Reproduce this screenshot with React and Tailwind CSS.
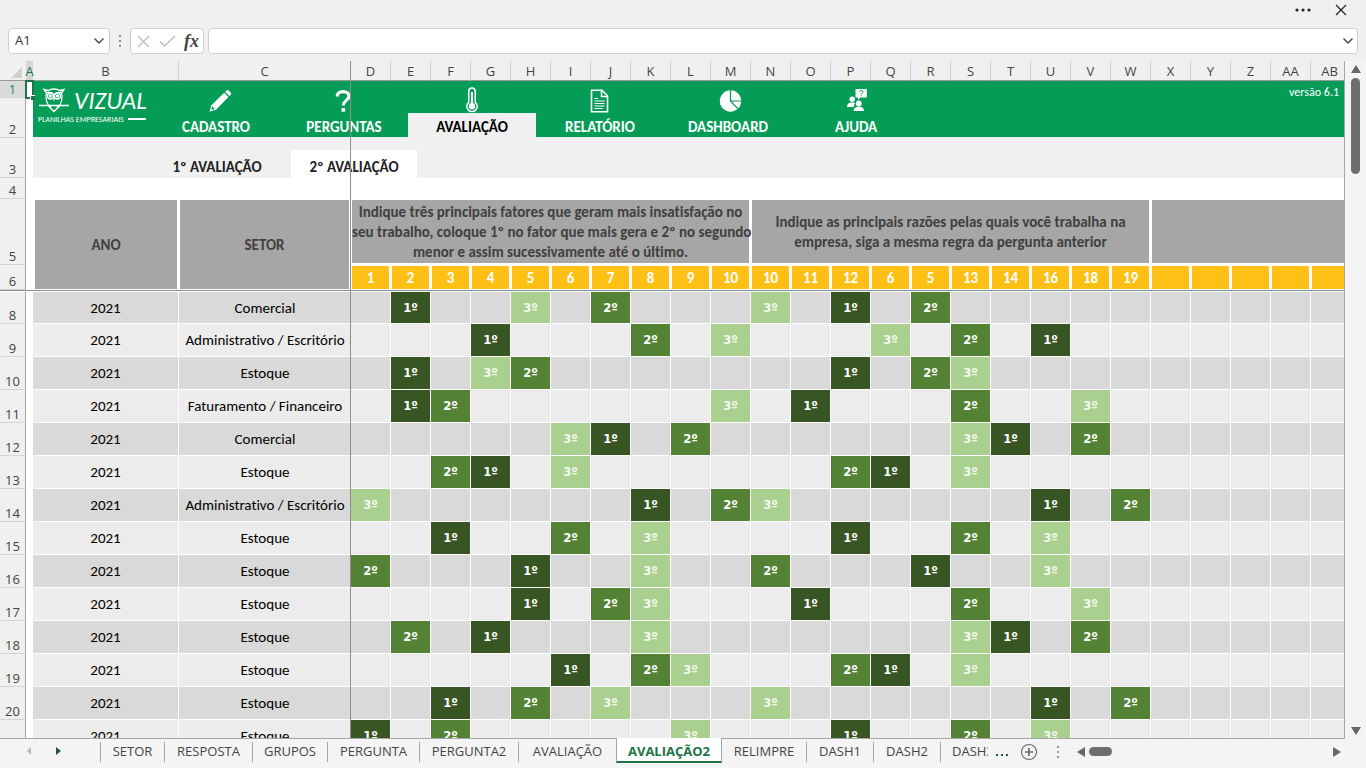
import React from "react";

const COLUMNS = ["D","E","F","G","H","I","J","K","L","M","N","O","P","Q","R","S","T","U","V","W","X","Y","Z","AA","AB"];

const FACTORS = ["1","2","3","4","5","6","7","8","9","10","10","11","12","6","5","13","14","16","18","19","","","","",""];

const ROWS = [
  { n: 8, sector: "Comercial", ranks: { E: 1, H: 3, J: 2, N: 3, P: 1, R: 2 } },
  { n: 9, sector: "Administrativo / Escritório", ranks: { G: 1, K: 2, M: 3, Q: 3, S: 2, U: 1 } },
  { n: 10, sector: "Estoque", ranks: { E: 1, G: 3, H: 2, P: 1, R: 2, S: 3 } },
  { n: 11, sector: "Faturamento / Financeiro", ranks: { E: 1, F: 2, M: 3, O: 1, S: 2, V: 3 } },
  { n: 12, sector: "Comercial", ranks: { I: 3, J: 1, L: 2, S: 3, T: 1, V: 2 } },
  { n: 13, sector: "Estoque", ranks: { F: 2, G: 1, I: 3, P: 2, Q: 1, S: 3 } },
  { n: 14, sector: "Administrativo / Escritório", ranks: { D: 3, K: 1, M: 2, N: 3, U: 1, W: 2 } },
  { n: 15, sector: "Estoque", ranks: { F: 1, I: 2, K: 3, P: 1, S: 2, U: 3 } },
  { n: 16, sector: "Estoque", ranks: { D: 2, H: 1, K: 3, N: 2, R: 1, U: 3 } },
  { n: 17, sector: "Estoque", ranks: { H: 1, J: 2, K: 3, O: 1, S: 2, V: 3 } },
  { n: 18, sector: "Estoque", ranks: { E: 2, G: 1, K: 3, S: 3, T: 1, V: 2 } },
  { n: 19, sector: "Estoque", ranks: { I: 1, K: 2, L: 3, P: 2, Q: 1, S: 3 } },
  { n: 20, sector: "Estoque", ranks: { F: 1, H: 2, J: 3, N: 3, U: 1, W: 2 } },
  { n: 21, sector: "Estoque", ranks: { D: 1, F: 2, L: 3, P: 1, S: 2, U: 3 } },
];

const RANK_STYLE = {
  1: "bg-[#375623] text-white",
  2: "bg-[#548235] text-white",
  3: "bg-[#a9d08e] text-[#f4faef]",
};

const SHEETS = [
  { name: "SETOR", width: "w-16" },
  { name: "RESPOSTA", width: "w-[88px]" },
  { name: "GRUPOS", width: "w-[75px]" },
  { name: "PERGUNTA", width: "w-[92px]" },
  { name: "PERGUNTA2", width: "w-[99px]" },
  { name: "AVALIAÇÃO", width: "w-[98px]" },
  { name: "AVALIAÇÃO2", width: "w-[106px]", active: true },
  { name: "RELIMPRE", width: "w-[84px]" },
  { name: "DASH1", width: "w-[67px]" },
  { name: "DASH2", width: "w-[67px]" },
];

function PencilIcon() {
  return (
    <svg width="32" height="24" viewBox="0 0 32 24" fill="white" aria-hidden="true">
      <path d="M9.500 22.800l1.900-6.600L24.200 3.800l4.300 4.300L16 20.700z" />
      <path d="M25.200 2.900l1.300-1.300a1.500 1.500 0 0 1 2.200 0l2 2a1.500 1.500 0 0 1 0 2.200l-1.300 1.300z" />
      <path d="M12.200 17.200l2.700 2.700-2.800.8-.7-.7z" fill="#059c57" />
    </svg>
  );
}

function QuestionIcon() {
  return (
    <svg width="24" height="24" viewBox="0 0 24 24" fill="none" stroke="white" strokeWidth="3.200" aria-hidden="true">
      <path d="M5.300 7.500C5.300 4.200 7.800 2.600 11.100 2.600c3.400 0 5.800 1.700 5.800 4.600 0 4.100-5.600 4.400-5.600 9.300" />
      <path d="M9.500 19h3.700v3.700H9.500z" fill="white" stroke="none" />
    </svg>
  );
}

function ThermometerIcon() {
  return (
    <svg width="24" height="26" viewBox="0 0 24 26" fill="none" stroke="white" aria-hidden="true">
      <path d="M8.800 15.300V4.200a3.200 3.200 0 0 1 6.400 0v11.100a5.200 5.200 0 1 1-6.400 0z" strokeWidth="1.500" />
      <path d="M12 5v12" strokeWidth="2" />
      <circle cx="12" cy="19.300" r="3.200" fill="white" stroke="none" />
    </svg>
  );
}

function ReportIcon() {
  return (
    <svg width="24" height="24" viewBox="0 0 24 24" fill="none" stroke="white" aria-hidden="true">
      <path d="M3.500 1.200H14L19.500 6.800v15.900h-16z" strokeWidth="1.600" />
      <path d="M13.500 1.500v6h5.800" strokeWidth="1.500" />
      <path d="M6.500 9.500H10M6.500 12h10M6.500 14.500h10M6.500 17h10M6.500 19.500h8" strokeWidth="1.200" />
    </svg>
  );
}

function PieIcon() {
  return (
    <svg width="28" height="24" viewBox="0 0 28 24" aria-hidden="true">
      <circle cx="16.500" cy="12" r="10.700" fill="white" />
      <path d="M16.500 1v11h11M16.500 12l7.500 7.800" fill="none" stroke="#059c57" strokeWidth="1.200" />
    </svg>
  );
}

function HelpIcon() {
  return (
    <svg width="24" height="26" viewBox="0 0 24 26" fill="white" aria-hidden="true">
      <path d="M11.500 2h11.300v8.500h-6.500L14 13v-2.500h-2.500z" />
      <path d="M15.600 5c0-2.100 3.300-2 3.300 0 0 1.200-1.600 1.200-1.600 2.300M17.200 8.200v1" fill="none" stroke="#059c57" strokeWidth="1" />
      <circle cx="8.200" cy="12.200" r="2.700" />
      <path d="M3 20c0-3.300 2-4.600 5.200-4.600 1.300 0 2.400.2 3.200.8-1.200 1-1.600 2.200-1.800 3.800z" />
      <circle cx="14.800" cy="16.500" r="2.900" />
      <path d="M9.600 24c0-3 1.800-4.200 5.200-4.200s5.200 1.200 5.200 4.200z" />
    </svg>
  );
}

function Logo() {
  return (
    <div className="flex w-[119px] flex-col pt-1 pl-[5px] text-white">
      <div className="flex h-7 items-center gap-1">
        <svg width="32" height="28" viewBox="0 0 32 28" fill="none" stroke="white" strokeWidth="1.300" aria-hidden="true">
          <path d="M6 4.500l4.500 1C13 3.500 19 3.500 21.500 5.500l4.500-1-2.500 3.500c1 4 0 9.500-2.500 13.500L16 26.500l-5-5C8.500 17.500 7.500 12 8.500 8z" />
          <circle cx="12.500" cy="11" r="3" />
          <circle cx="19.500" cy="11" r="3" />
          <circle cx="12.500" cy="11" r="1" fill="white" />
          <circle cx="19.500" cy="11" r="1" fill="white" />
          <path d="M8.500 7.500c3-.5 6 0 7.500 2.500 1.500-2.500 4.500-3 7.500-2.500M16 13v2.500" />
          <path d="M1 20.500h30M12.500 20.500v3M19.500 20.500v3" />
        </svg>
        <span className="pt-1 text-[25px] leading-6 font-normal italic">VIZUAL</span>
      </div>
      <div className="flex items-center gap-1 whitespace-nowrap">
        <span className="text-[8px] leading-3 font-normal">PLANILHAS EMPRESARIAIS</span>
        <span className="h-0.5 w-[18px] bg-white" />
      </div>
    </div>
  );
}

const MENU = [
  { label: "CADASTRO", Icon: PencilIcon },
  { label: "PERGUNTAS", Icon: QuestionIcon },
  { label: "AVALIAÇÃO", Icon: ThermometerIcon, active: true },
  { label: "RELATÓRIO", Icon: ReportIcon },
  { label: "DASHBOARD", Icon: PieIcon },
  { label: "AJUDA", Icon: HelpIcon },
];

function Banner() {
  return (
    <header className="flex h-14 bg-[#059c57]">
      <Logo />
      <nav className="flex" aria-label="Menu">
        {MENU.map(({ label, Icon, active }) => (
          <a key={label} href="#" className="flex w-32 flex-col">
            <span className="flex h-8 items-end justify-center pt-1.5">
              <Icon />
            </span>
            <span
              className={
                active
                  ? "flex h-6 items-center justify-center bg-[#f0f0f0] pt-1 text-[15px] font-bold text-black"
                  : "flex h-6 items-center justify-center pt-1 text-[15px] font-bold text-white"
              }
            >
              {label}
            </span>
          </a>
        ))}
      </nav>
      <span className="ml-auto pt-[3px] pr-[5px] text-[12px] leading-4 text-white">versão 6.1</span>
    </header>
  );
}

function RowHead({ n, active }) {
  return (
    <th
      scope="row"
      className={
        (active ? "bg-[#dadada] text-[#2f7d54] " : "bg-[#f0f0f0] text-[#444] ") +
        "border-r border-b border-r-[#a6a6a6] border-b-[#d4d4d4] align-bottom font-['Open_Sans',sans-serif] text-[13px] leading-4 font-normal"
      }
    >
      {n}
    </th>
  );
}

function Chevron() {
  return (
    <svg width="12" height="8" viewBox="0 0 12 8" fill="none" stroke="#444" strokeWidth="1.400" aria-hidden="true">
      <path d="M1.500 1.500L6 6l4.500-4.500" />
    </svg>
  );
}

function FormulaBar() {
  return (
    <div className="flex h-[26px] shrink-0 items-stretch pr-2 pl-2">
      <div className="flex w-[102px] items-center rounded border border-[#d0d0d0] bg-white pr-1 pl-1.5">
        <input aria-label="Caixa de nome" defaultValue="A1" className="w-0 grow bg-transparent text-[13px] text-[#333] outline-none" />
        <button type="button" aria-label="Abrir lista de nomes">
          <Chevron />
        </button>
      </div>
      <div className="flex w-5 items-center justify-center">
        <svg width="3" height="12" viewBox="0 0 3 12" fill="#888" aria-hidden="true">
          <path d="M0 0h2v2H0zM0 5h2v2H0zM0 10h2v2H0z" />
        </svg>
      </div>
      <div className="flex w-[74px] items-center justify-between rounded border border-[#d0d0d0] bg-white pr-1 pl-1.5">
        <button type="button" aria-label="Cancelar">
          <svg width="13" height="13" viewBox="0 0 13 13" fill="none" stroke="#bbb" strokeWidth="1.300" aria-hidden="true">
            <path d="M1 1l11 11M12 1L1 12" />
          </svg>
        </button>
        <button type="button" aria-label="Inserir">
          <svg width="17" height="12" viewBox="0 0 17 12" fill="none" stroke="#bbb" strokeWidth="1.400" aria-hidden="true">
            <path d="M1 6.500L5.500 11 16 1" />
          </svg>
        </button>
        <button type="button" className="font-['Liberation_Serif',serif] text-lg leading-5 font-bold text-[#444] italic">
          fx
        </button>
      </div>
      <div className="ml-1 flex grow items-center rounded border border-[#d0d0d0] bg-white pr-[3px] pl-2">
        <input aria-label="Barra de fórmulas" className="w-0 grow bg-transparent text-[13px] outline-none" />
        <button type="button" aria-label="Expandir barra de fórmulas">
          <Chevron />
        </button>
      </div>
    </div>
  );
}

const HEAD_CELL = "border-t border-r-2 border-white bg-[#a6a6a6] text-center align-middle text-[15px] leading-5 font-bold whitespace-nowrap text-[#404040] ";

function Sheet() {
  return (
    <table className="w-full table-fixed border-separate border-spacing-0 bg-white">
      <colgroup>
        <col className="w-[26px]" />
        <col className="w-[7px]" />
        <col className="w-[146px]" />
        <col className="w-[172px]" />
        {COLUMNS.map((c) => (
          <col key={c} className={c === "AB" ? "" : "w-10"} />
        ))}
      </colgroup>
      <thead>
        <tr className="h-5 bg-[#f0f0f0] text-[13px] leading-4 text-[#444]">
          <td className="border-b border-[#9a9a9a]">
            <svg width="26" height="16" viewBox="0 0 26 16" fill="#cfcfcf" aria-hidden="true">
              <path d="M22 4v11H11z" />
            </svg>
          </td>
          <th scope="col" className="border-b border-[#9a9a9a] bg-[#d6d6d6] font-normal text-[#217346]">
            <span className="flex justify-center">A</span>
          </th>
          <th scope="col" className="border-r border-b border-r-[#d0d0d0] border-b-[#9a9a9a] font-normal">B</th>
          <th scope="col" className="border-r border-b border-r-[#d0d0d0] border-b-[#9a9a9a] font-normal">C</th>
          {COLUMNS.map((c) => (
            <th
              key={c}
              scope="col"
              className={
                c === "AB"
                  ? "border-b border-b-[#9a9a9a] pl-1 font-normal"
                  : "border-r border-b border-r-[#d0d0d0] border-b-[#9a9a9a] font-normal"
              }
            >
              {c}
            </th>
          ))}
        </tr>
      </thead>
      <tbody className="font-['Carlito','Lato',sans-serif] [font-variant-ligatures:none]">
        <tr className="h-[17px]">
          <RowHead n={1} active />
          <td className="relative">
            <span className="absolute -top-px -left-px h-[19px] w-[9px] border-2 border-[#217346]" />
            <span className="absolute top-[14px] left-1 size-[5px] border-t border-l border-white bg-[#217346]" />
          </td>
          <td colSpan={27} rowSpan={2} className="bg-[#f0f0f0] p-0 align-top">
            <Banner />
          </td>
        </tr>
        <tr className="h-10">
          <RowHead n={2} />
          <td />
        </tr>
        <tr className="h-10">
          <RowHead n={3} />
          <td />
          <td colSpan={27} className="bg-[#f0f0f0] align-bottom">
            <nav className="flex pl-[110px] text-[15px] font-bold text-[#222]" aria-label="Avaliações">
              <a href="#" className="flex h-7 w-[148px] items-center justify-center pt-1.5">1º AVALIAÇÃO</a>
              <a href="#" className="flex h-7 w-[126px] items-center justify-center bg-white pt-1.5">2º AVALIAÇÃO</a>
            </nav>
          </td>
        </tr>
        <tr className="h-[21px]">
          <RowHead n={4} />
          <td colSpan={28} />
        </tr>
        <tr className="h-[66px]">
          <RowHead n={5} />
          <td />
          <th scope="col" rowSpan={2} className={HEAD_CELL + "border-b border-l-2"}>ANO</th>
          <th scope="col" rowSpan={2} className={HEAD_CELL + "border-b border-l"}>SETOR</th>
          <th scope="colgroup" colSpan={10} className={HEAD_CELL + "border-b-2 border-l"}>
            Indique três principais fatores que geram mais insatisfação no
            <br />
            seu trabalho, coloque 1º no fator que mais gera e 2º no segundo
            <br />
            menor e assim sucessivamente até o último.
          </th>
          <th scope="colgroup" colSpan={10} className={HEAD_CELL + "border-b-2 border-l"}>
            Indique as principais razões pelas quais você trabalha na
            <br />
            empresa, siga a mesma regra da pergunta anterior
          </th>
          <th scope="colgroup" colSpan={5} className="border-t border-b-2 border-l border-white bg-[#a6a6a6]" />
        </tr>
        <tr className="h-[25px]">
          <RowHead n={6} />
          <td />
          {FACTORS.map((f, i) => (
            <th
              key={COLUMNS[i]}
              scope="col"
              className={
                (i === FACTORS.length - 1 ? "" : "border-r-2 ") +
                "border-t border-b border-l border-white bg-[#ffc016] text-center text-[15px] leading-4 font-bold text-white"
              }
            >
              {f}
            </th>
          ))}
        </tr>
        <tr className="h-0.5">
          <td colSpan={29} className="border-t border-[#8e8e8e] bg-white" />
        </tr>
        {ROWS.map(({ n, sector, ranks }) => {
          const shade = n % 2 === 0 ? "bg-[#d9d9d9]" : "bg-[#ececec]";
          return (
            <tr key={n} className={(n === 8 ? "h-8 " : "h-[33px] ") + "text-center text-[15px] leading-4 text-black"}>
              <RowHead n={n} />
              <td />
              <td className={"border-r border-b border-white " + shade}>2021</td>
              <td className={"border-b border-white whitespace-nowrap " + shade}>{sector}</td>
              {COLUMNS.map((c) => (
                <td
                  key={c}
                  className={
                    (c === "AB" ? "" : "border-r ") +
                    "border-b border-white font-['DejaVu_Sans_Condensed','DejaVu_Sans',sans-serif] text-[13px] font-bold " +
                    (ranks[c] ? RANK_STYLE[ranks[c]] : shade)
                  }
                >
                  {ranks[c] ? ranks[c] + "º" : ""}
                </td>
              ))}
            </tr>
          );
        })}
      </tbody>
    </table>
  );
}

function SheetTabs() {
  return (
    <footer className="flex h-[30px] shrink-0 items-start bg-[#f4f4f4] text-[13px] text-[#444]">
      <div className="flex h-[25px] w-[100px] shrink-0 items-center border-t border-[#a6a6a6]">
        <button type="button" aria-label="Planilha anterior" className="ml-[26px]">
          <svg width="6" height="8" viewBox="0 0 6 8" fill="#b8b8b8" aria-hidden="true"><path d="M5 0v8L1 4z" /></svg>
        </button>
        <button type="button" aria-label="Próxima planilha" className="ml-6">
          <svg width="6" height="8" viewBox="0 0 6 8" fill="#1c5c3c" aria-hidden="true"><path d="M0 0v8l5-4z" /></svg>
        </button>
      </div>
      <div className="flex shrink-0 items-start" role="tablist" aria-label="Planilhas">
        {SHEETS.map(({ name, width, active }, i) => (
          <button
            key={name}
            type="button"
            role="tab"
            aria-selected={Boolean(active)}
            className={
              width +
              (active
                ? " flex h-[25px] items-end border-x border-b-2 border-x-[#a6a6a6] border-b-[#217346] bg-white pt-0.5 font-bold text-[#217346]"
                : " flex h-6 items-end border-t border-[#a6a6a6]")
            }
          >
            <span
              className={
                active
                  ? "flex h-5 w-full items-center justify-center pt-0.5"
                  : i === 7
                    ? "flex h-5 w-full items-center justify-center"
                    : "flex h-5 w-full items-center justify-center border-l border-[#a6a6a6]"
              }
            >
              {name}
            </span>
          </button>
        ))}
        <button type="button" role="tab" aria-selected={false} className="flex h-6 w-12 items-end overflow-hidden border-t border-[#a6a6a6]">
          <span className="flex h-5 items-center border-l border-[#a6a6a6] pl-[11px]">DASH3</span>
        </button>
      </div>
      <div className="flex h-[26px] grow items-center border-t border-[#a6a6a6]">
        <button type="button" aria-label="Mais planilhas" className="ml-2 pt-2">
          <svg width="12" height="3" viewBox="0 0 12 3" fill="#1c5c3c" aria-hidden="true"><path d="M0 0h2v2H0zM5 0h2v2H5zM10 0h2v2h-2z" /></svg>
        </button>
        <button type="button" aria-label="Nova planilha" className="ml-3">
          <svg width="18" height="18" viewBox="0 0 18 18" fill="none" stroke="#666" aria-hidden="true">
            <circle cx="9" cy="9" r="7.500" strokeWidth="1.100" />
            <path d="M9 5v8M5 9h8" strokeWidth="1.600" />
          </svg>
        </button>
        <svg className="ml-[19px]" width="3" height="12" viewBox="0 0 3 12" fill="#999" aria-hidden="true">
          <path d="M0 0h2v2H0zM0 5h2v2H0zM0 10h2v2H0z" />
        </svg>
        <button type="button" aria-label="Rolar para a esquerda" className="ml-[17px]">
          <svg width="8" height="10" viewBox="0 0 8 10" fill="#666" aria-hidden="true"><path d="M8 0v10L0 5z" /></svg>
        </button>
        <span className="ml-1 h-[9px] w-[23px] rounded-full bg-[#6e6e6e]" />
        <button type="button" aria-label="Rolar para a direita" className="ml-auto pr-1">
          <svg width="8" height="10" viewBox="0 0 8 10" fill="#666" aria-hidden="true"><path d="M0 0v10l8-5z" /></svg>
        </button>
      </div>
      <div className="w-[21px] shrink-0" />
    </footer>
  );
}

export default function App() {
  return (
    <div className="flex h-screen flex-col overflow-hidden bg-[#f0f0f0] font-['Open_Sans',sans-serif]">
      <div className="flex h-7 shrink-0 items-start justify-end gap-6 pt-1 pr-[19px]">
        <button type="button" aria-label="Mais opções" className="py-1">
          <svg width="16" height="4" viewBox="0 0 16 4" fill="#222" aria-hidden="true">
            <circle cx="2" cy="2" r="1.600" />
            <circle cx="8" cy="2" r="1.600" />
            <circle cx="14" cy="2" r="1.600" />
          </svg>
        </button>
        <button type="button" aria-label="Fechar">
          <svg width="12" height="12" viewBox="0 0 12 12" fill="none" stroke="#222" strokeWidth="1.200" aria-hidden="true">
            <path d="M1 1l10 10M11 1L1 11" />
          </svg>
        </button>
      </div>
      <FormulaBar />
      <main className="flex min-h-0 grow pt-[7px]">
        <div className="relative min-w-0 grow overflow-hidden border-r border-[#a6a6a6]">
          <Sheet />
          <span className="absolute top-0 bottom-0 left-[350px] w-px bg-[#8e8e8e]" />
        </div>
        <div className="flex w-[21px] shrink-0 flex-col items-center bg-[#f4f4f4] pt-1 pb-[3px]">
          <button type="button" aria-label="Rolar para cima">
            <svg width="10" height="8" viewBox="0 0 10 8" fill="#666" aria-hidden="true"><path d="M5 0l5 8H0z" /></svg>
          </button>
          <span className="mt-[5px] h-24 w-[9px] rounded-full bg-[#6e6e6e]" />
          <button type="button" aria-label="Rolar para baixo" className="mt-auto">
            <svg width="10" height="8" viewBox="0 0 10 8" fill="#666" aria-hidden="true"><path d="M0 0h10L5 8z" /></svg>
          </button>
        </div>
      </main>
      <SheetTabs />
    </div>
  );
}
